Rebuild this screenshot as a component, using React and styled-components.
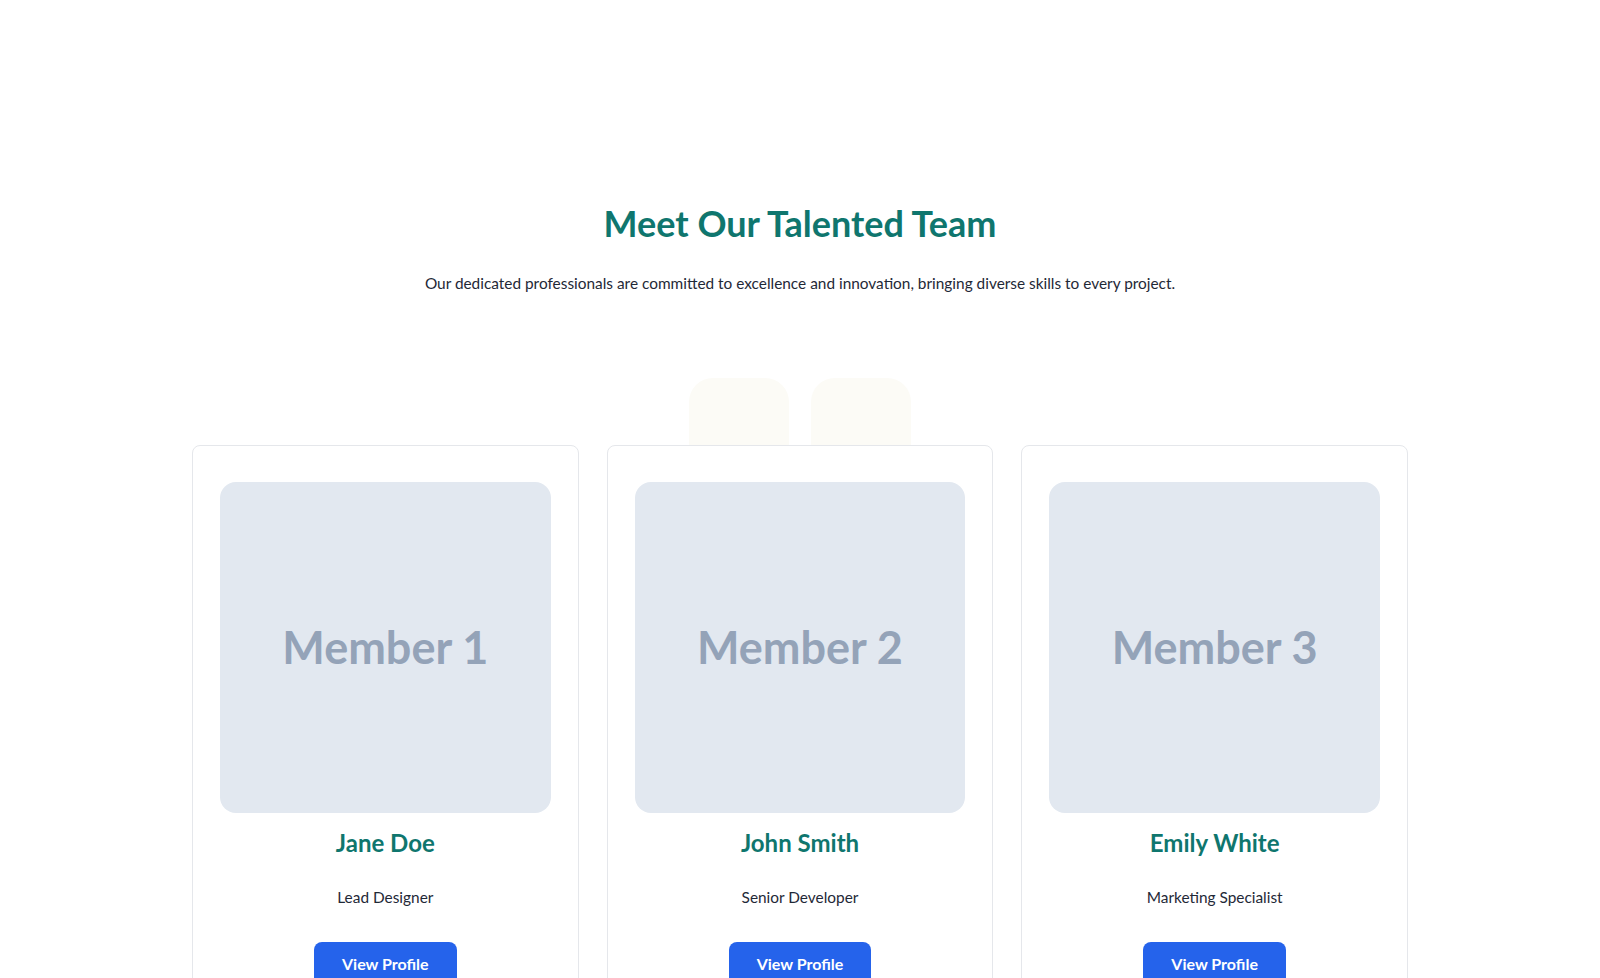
import React from "react";
import styled, { createGlobalStyle } from "styled-components";

const GlobalStyle = createGlobalStyle`
  html, body {
    margin: 0;
    padding: 0;
    background: #ffffff;
    font-family: "Lato", "Noto Sans", sans-serif;
    color: #1f2937;
  }
  ::-webkit-scrollbar {
    display: none;
  }
`;

const Section = styled.section`
  padding: 203px 0 60px;
  display: flex;
  flex-direction: column;
  align-items: center;
`;

const Title = styled.h2`
  margin: 0;
  font-size: 36px;
  line-height: 40px;
  font-weight: 700;
  color: #0f766e;
  text-align: center;
`;

const Subtitle = styled.p`
  margin: 28px 0 0;
  font-size: 15.4px;
  line-height: 24px;
  color: #1f2937;
  text-align: center;
`;

const TabRow = styled.div`
  margin-top: 83px;
  display: flex;
  justify-content: center;
  gap: 22px;
`;

const Tab = styled.div`
  width: 100px;
  height: 67px;
  border-radius: 24px 24px 0 0;
  background: #fcfbf6;
`;

const Grid = styled.div`
  width: 1216px;
  display: grid;
  grid-template-columns: repeat(3, 1fr);
  gap: 28px;
`;

const Card = styled.div`
  border: 1px solid #e5e7eb;
  border-radius: 8px;
  padding: 36px 27px 40px;
  display: flex;
  flex-direction: column;
  align-items: center;
  background: #ffffff;
`;

const Photo = styled.div`
  width: 100%;
  aspect-ratio: 1 / 1;
  border-radius: 16px;
  background: #e2e8f0;
  display: flex;
  align-items: center;
  justify-content: center;
  font-size: 45px;
  font-weight: 700;
  color: #94a3b8;
`;

const Name = styled.h3`
  margin: 14px 0 0;
  font-size: 24px;
  line-height: 32px;
  font-weight: 700;
  color: #0f766e;
`;

const Role = styled.p`
  margin: 26px 0 0;
  font-size: 15.4px;
  line-height: 24px;
  color: #1f2937;
`;

const Button = styled.button`
  margin-top: 33px;
  padding: 12px 28px;
  border: none;
  border-radius: 8px;
  background: #2563eb;
  color: #ffffff;
  font-family: inherit;
  font-size: 16px;
  line-height: 20px;
  font-weight: 700;
  cursor: pointer;
`;

const members = [
  { label: "Member 1", name: "Jane Doe", role: "Lead Designer" },
  { label: "Member 2", name: "John Smith", role: "Senior Developer" },
  { label: "Member 3", name: "Emily White", role: "Marketing Specialist" },
];

export default function App() {
  return (
    <>
      <GlobalStyle />
      <Section>
        <Title>Meet Our Talented Team</Title>
        <Subtitle>
          Our dedicated professionals are committed to excellence and
          innovation, bringing diverse skills to every project.
        </Subtitle>
        <TabRow>
          <Tab />
          <Tab />
        </TabRow>
        <Grid>
          {members.map((m) => (
            <Card key={m.name}>
              <Photo>{m.label}</Photo>
              <Name>{m.name}</Name>
              <Role>{m.role}</Role>
              <Button>View Profile</Button>
            </Card>
          ))}
        </Grid>
      </Section>
    </>
  );
}
